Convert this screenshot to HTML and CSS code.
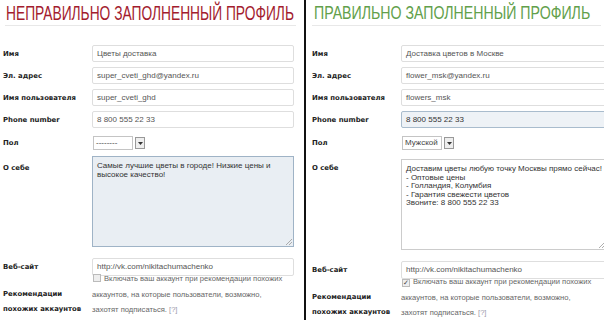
FILE: index.html
```html
<!DOCTYPE html>
<html lang="ru">
<head>
<meta charset="utf-8">
<link rel="stylesheet" href="styles.css">
</head>
<body>
<div class="page">
  <section class="panel panel-bad">
    <h1 class="title title-bad"><span class="title-text">НЕПРАВИЛЬНО ЗАПОЛНЕННЫЙ ПРОФИЛЬ</span></h1>
    <div class="form">
      <div class="row"><div class="label">Имя</div><div class="input">Цветы доставка</div></div>
      <div class="row"><div class="label">Эл. адрес</div><div class="input">super_cveti_ghd@yandex.ru</div></div>
      <div class="row"><div class="label">Имя пользователя</div><div class="input">super_cveti_ghd</div></div>
      <div class="row"><div class="label">Phone number</div><div class="input">8 800 555 22 33</div></div>
      <div class="row row-select"><div class="label">Пол</div><div class="select"><span class="select-box">--------</span><span class="select-btn"><svg width="5" height="3" viewBox="0 0 5 3"><path d="M0 0h5L2.5 3z" fill="#333"/></svg></span></div></div>
      <div class="row row-area"><div class="label label-top">О себе</div><div class="textarea textarea-focus">Самые лучшие цветы в городе! Низкие цены и высокое качество!<svg class="grip" width="6" height="6" viewBox="0 0 6 6"><path d="M6 0L0 6M6 3L3 6" stroke="#999" stroke-width="0.8"/></svg></div></div>
      <div class="row row-web"><div class="label">Веб-сайт</div><div class="input input-web">http://vk.com/nikitachumachenko</div></div>
      <div class="row row-check"><div class="label label-bottom">Рекомендации похожих аккаунтов</div><div class="check-text"><span class="checkbox"></span>Включать ваш аккаунт при рекомендации похожих аккаунтов, на которые пользователи, возможно, захотят подписаться. <span class="help">[?]</span></div></div>
    </div>
  </section>
  <div class="divider"></div>
  <section class="panel panel-good">
    <h1 class="title title-good"><span class="title-text">ПРАВИЛЬНО ЗАПОЛНЕННЫЙ ПРОФИЛЬ</span></h1>
    <div class="form">
      <div class="row"><div class="label">Имя</div><div class="input">Доставка цветов в Москве</div></div>
      <div class="row"><div class="label">Эл. адрес</div><div class="input">flower_msk@yandex.ru</div></div>
      <div class="row"><div class="label">Имя пользователя</div><div class="input">flowers_msk</div></div>
      <div class="row"><div class="label">Phone number</div><div class="input input-focus">8 800 555 22 33</div></div>
      <div class="row row-select"><div class="label">Пол</div><div class="select"><span class="select-box">Мужской</span><span class="select-btn"><svg width="5" height="3" viewBox="0 0 5 3"><path d="M0 0h5L2.5 3z" fill="#333"/></svg></span></div></div>
      <div class="row row-area"><div class="label label-top">О себе</div><div class="textarea">Доставим цветы любую точку Москвы прямо сейчас!<br>- Оптовые цены<br>- Голландия, Колумбия<br>- Гарантия свежести цветов<br>Звоните: 8 800 555 22 33<svg class="grip" width="6" height="6" viewBox="0 0 6 6"><path d="M6 0L0 6M6 3L3 6" stroke="#999" stroke-width="0.8"/></svg></div></div>
      <div class="row row-web"><div class="label">Веб-сайт</div><div class="input input-web">http://vk.com/nikitachumachenko</div></div>
      <div class="row row-check"><div class="label label-bottom">Рекомендации похожих аккаунтов</div><div class="check-text"><span class="checkbox checked">✓</span>Включать ваш аккаунт при рекомендации похожих аккаунтов, на которые пользователи, возможно, захотят подписаться. <span class="help">[?]</span></div></div>
    </div>
  </section>
</div>
</body>
</html>
```

FILE: styles.css
```css
* { box-sizing: border-box; }
html, body { margin: 0; padding: 0; background: #fff; }
body { font-family: "Liberation Sans", Arial, sans-serif; }

.page {
  display: flex;
  width: 604px;
  height: 320px;
  overflow: hidden;
}

.panel {
  flex: none;
  overflow: hidden;
}
.panel-bad { width: 304px; padding-left: 3px; }
.panel-good { width: 298px; padding-left: 6px; }

.divider {
  flex: none;
  width: 2px;
  background: #111;
}

.title {
  margin: 0;
  height: 26px;
  font-family: "Liberation Sans", Arial, sans-serif;
  font-weight: normal;
  white-space: nowrap;
  border-bottom: 1px solid #e8e8e8;
}
.title-text {
  display: inline-block;
  transform-origin: left center;
}
.title-bad {
  color: #a31c2e;
  margin-left: 2px;
  width: 291px;
  padding-left: 1px;
  font-size: 21px;
  line-height: 25px;
}
.title-bad .title-text { transform: scaleX(0.656); }
.title-good {
  color: #62a04b;
  width: 289px;
  padding-left: 2px;
  font-size: 19px;
  line-height: 25px;
}
.title-good .title-text { transform: scaleX(0.745); }

.form {
  margin-top: 19px;
  display: flex;
  flex-direction: column;
  gap: 5px;
}

.row {
  display: grid;
  grid-template-columns: 89px 1fr;
  align-items: center;
}
.row-select { margin-top: 3px; }
.row-area { margin-top: 1px; align-items: start; }
.row-web { margin-top: 6px; }
.row-check { margin-top: -10px; align-items: end; }

.label {
  font-family: "DejaVu Sans", Verdana, sans-serif;
  font-weight: bold;
  font-size: 6.9px;
  color: #222;
  white-space: nowrap;
}
.label-top { padding-top: 8px; }
.label-bottom { white-space: normal; line-height: 15.5px; width: 80px; }

.input {
  height: 17px;
  border: 1px solid #dedede;
  border-radius: 2px;
  background: #fff;
  font-size: 8px;
  line-height: 15px;
  color: #555;
  padding-left: 4px;
  white-space: nowrap;
}
.panel-bad .input { width: 202px; }
.panel-good .input { width: 206px; }
.input-web { height: 18px; line-height: 16px; }
.input-focus {
  background: #eef2f6;
  border-color: #a9bccd;
  color: #333;
}

.select {
  display: flex;
  align-items: center;
  gap: 2px;
  margin-left: 1px;
}
.select-box {
  width: 40px;
  height: 14px;
  border: 1px solid #c4c4c4;
  font-size: 8px;
  line-height: 12px;
  color: #444;
  padding-left: 2px;
}
.select-btn {
  width: 10px;
  height: 12px;
  border: 1px solid #999;
  background: #eee;
  display: flex;
  align-items: center;
  justify-content: center;
}

.textarea {
  position: relative;
  height: 91px;
  border: 1px solid #ccc;
  font-size: 8px;
  line-height: 8.6px;
  color: #333;
  padding: 5px 3px 5px 4px;
}
.panel-bad .textarea { width: 202px; }
.panel-good .textarea { width: 206px; margin-top: 3px; }
.textarea-focus {
  background: #e9eef3;
  border-color: #9fb3c6;
}
.grip { position: absolute; right: 1px; bottom: 1px; }

.check-text {
  font-size: 7.6px;
  line-height: 15.5px;
  color: #666;
  width: 196px;
}
.checkbox {
  display: inline-block;
  width: 8px;
  height: 8px;
  border: 1px solid #bbb;
  background: #eee;
  margin: 0 3px 0 1px;
  vertical-align: -1px;
  font-size: 7px;
  line-height: 6px;
  text-align: center;
  color: #444;
}
.help { color: #99a; }
```
